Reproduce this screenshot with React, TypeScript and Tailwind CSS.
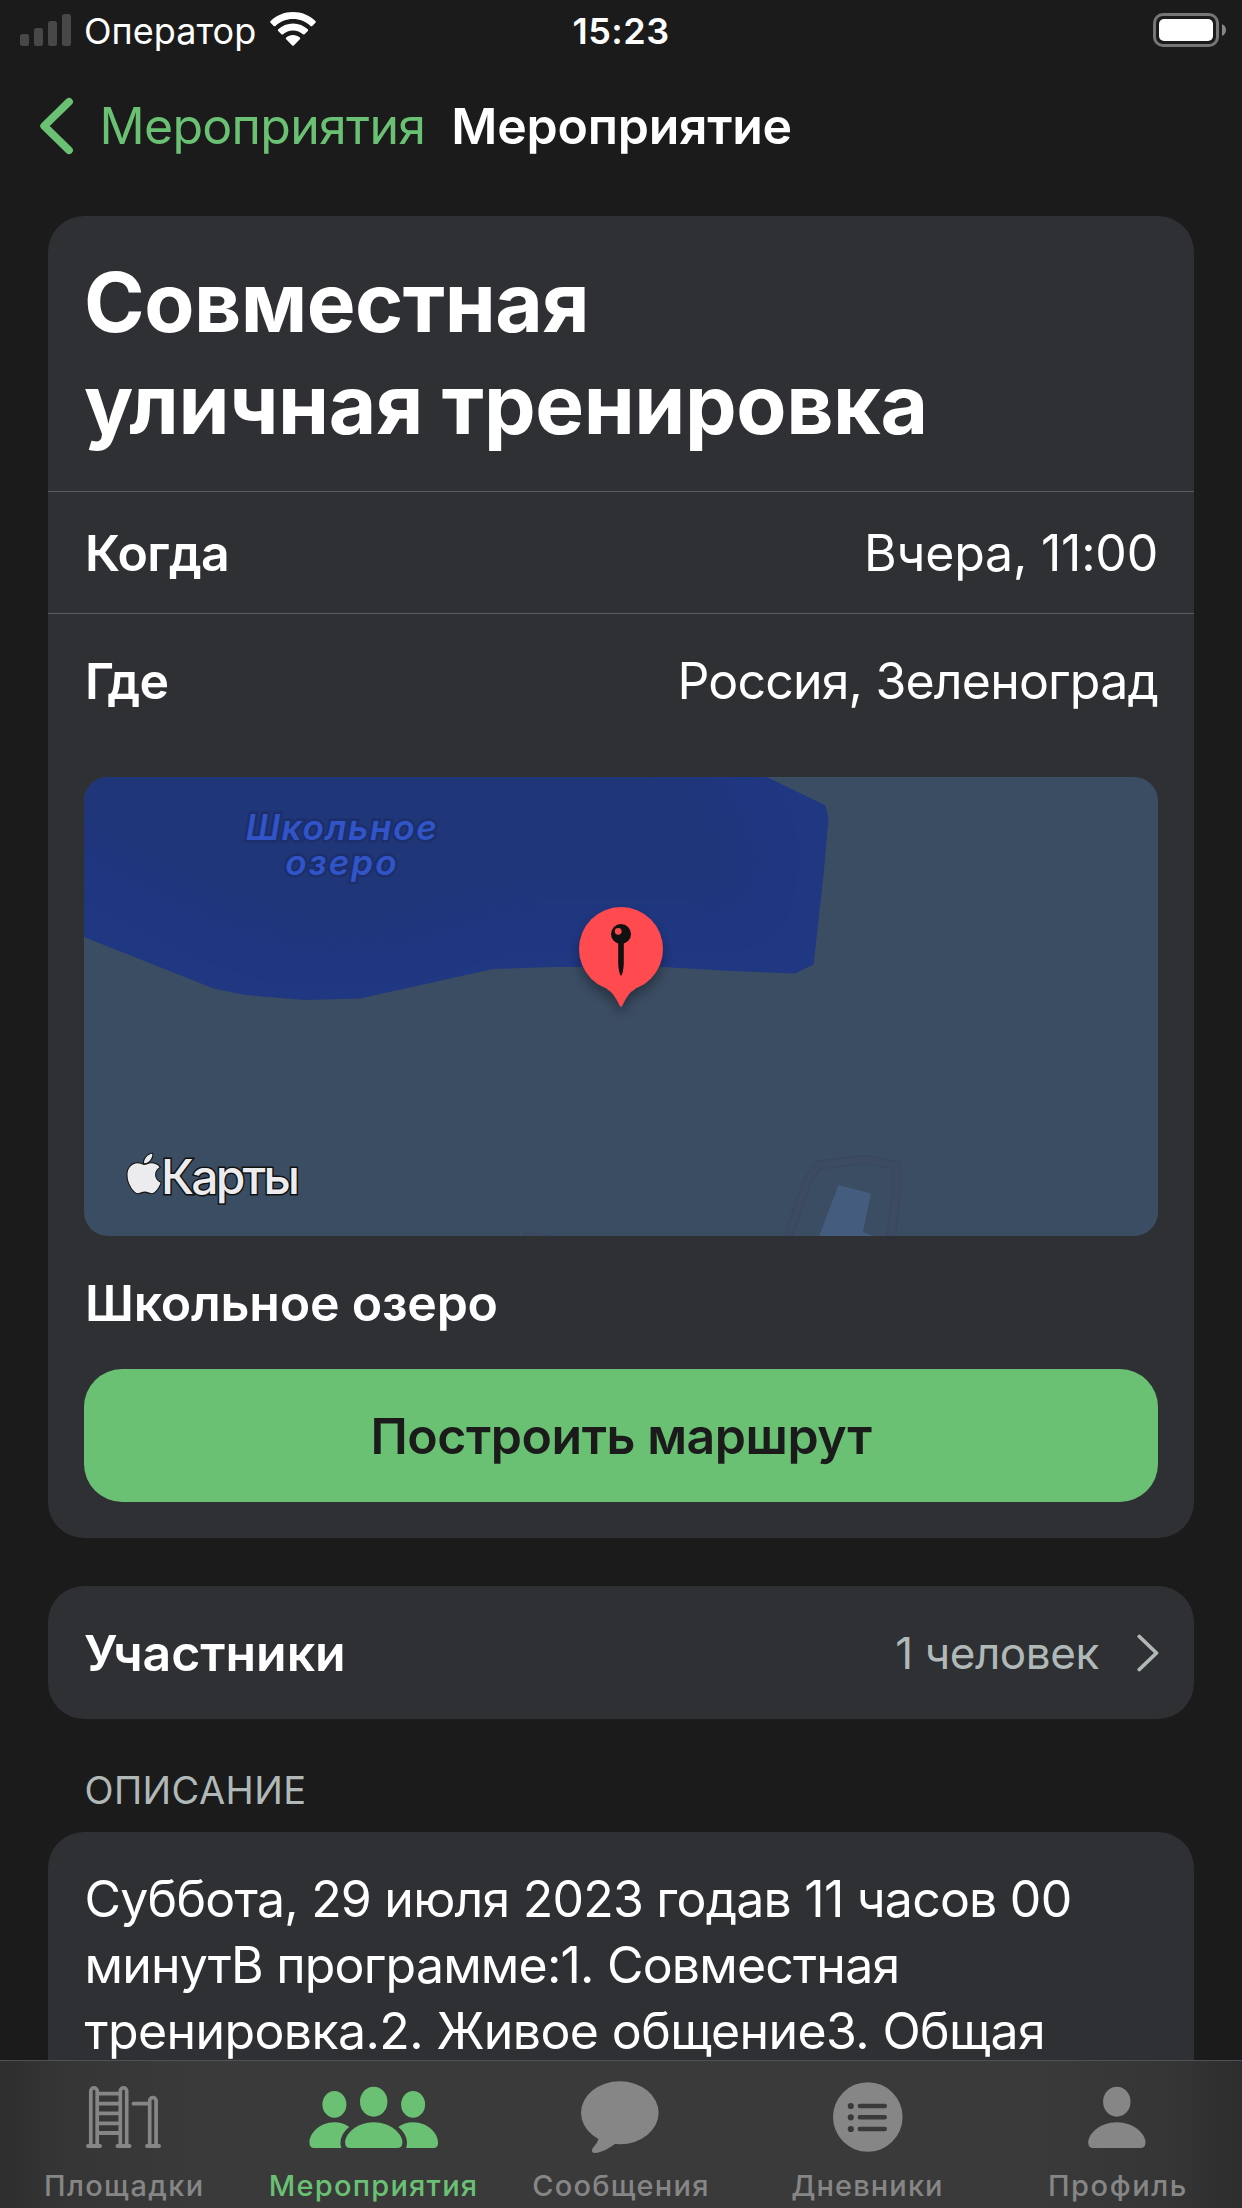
import type { ReactNode } from "react";
import { FaApple } from "react-icons/fa";

function StatusBar() {
  return (
    <div className="flex h-[60px] w-full items-center pt-[2px] text-[36px] leading-[60px] text-white">
      <div className="flex flex-1 items-center pl-[15px]">
        <svg width="52" height="32" viewBox="0 0 52 32" fill="#484848" className="mb-[2px] ml-[5px]">
          <rect x="0" y="20" width="9" height="12" rx="2.5" />
          <rect x="14" y="14" width="9" height="18" rx="2.5" />
          <rect x="28" y="7" width="9" height="25" rx="2.5" />
          <rect x="42" y="0" width="9" height="32" rx="2.5" />
        </svg>
        <span className="ml-[12px] tracking-[0.02px]">Оператор</span>
        <svg width="46" height="34" viewBox="0 0 46 34" className="mb-[4px] ml-[14px]" fill="#fff">
          <path d="M23 0 C14.200 0 6.200 3.400 .6 9 Q-.2 9.900 .6 10.700 L3.700 13.900 Q4.600 14.700 5.500 13.900 C10.200 9.500 16.300 7 23 7 S35.800 9.500 40.500 13.900 Q41.400 14.700 42.300 13.900 L45.400 10.700 Q46.200 9.900 45.400 9 C39.800 3.400 31.800 0 23 0 Z" />
          <path d="M23 11.400 C17.300 11.400 12.100 13.600 8.200 17.200 Q7.400 18 8.200 18.900 L11.400 22.200 Q12.200 23 13.100 22.200 C15.700 19.800 19.200 18.400 23 18.400 S30.300 19.800 32.900 22.200 Q33.800 23 34.600 22.200 L37.800 18.900 Q38.600 18 37.800 17.200 C33.900 13.600 28.700 11.400 23 11.400 Z" />
          <path d="M23 23 C20.400 23 18 24 16.200 25.600 Q15.400 26.400 16.200 27.200 L22.200 33.400 Q23 34.100 23.800 33.400 L29.800 27.200 Q30.600 26.400 29.800 25.600 C28 24 25.600 23 23 23 Z" />
        </svg>
      </div>
      <span className="font-semibold tracking-[0.48px]">15:23</span>
      <div className="flex flex-1 items-center justify-end pr-[15px]">
        <svg width="74" height="34" viewBox="0 0 74 34" className="mb-[2px]">
          <rect x="1.500" y="1.500" width="63" height="31" rx="8.500" fill="none" stroke="#767676" strokeWidth="3" />
          <rect x="6" y="6" width="54" height="22" rx="5" fill="#fff" />
          <path d="M69 11 Q73 13 73 17 T69 23 Z" fill="#868686" />
        </svg>
      </div>
    </div>
  );
}

function NavBar() {
  return (
    <div className="flex h-[132px] w-full items-center pl-[40px] text-[50px]">
      <svg width="34" height="58" viewBox="0 0 34 58" fill="none">
        <path d="M29 4.800 L4.200 29 L29 53.200" stroke="#6ac174" strokeWidth="7.800" strokeLinecap="round" strokeLinejoin="round" />
      </svg>
      <span className="ml-[25.5px] tracking-[-0.7px] text-[#6ac174]">Мероприятия</span>
      <span className="ml-[26px] font-semibold tracking-[-0.25px] text-white">Мероприятие</span>
    </div>
  );
}

function EventMap() {
  return (
    <div className="relative mt-[29px] h-[459px] w-full overflow-hidden rounded-[24px] bg-[#3b4d63]">
      <svg width="1074" height="459" viewBox="84 777 1074 459" className="block">
        <defs>
          <clipPath id="lake">
            <path d="M84 937 L213.600 988.500 L245.700 995 L304.600 1000 L360 998.500 L493 969 L553 967 L663 967 L731 971 L794.600 973.500 L813.600 964.500 L824 870 L828.500 818 L825.500 805.500 L766.800 777 H84 Z" />
          </clipPath>
          <filter id="deep" x="-20%" y="-20%" width="140%" height="140%" colorInterpolationFilters="sRGB">
            <feGaussianBlur stdDeviation="22" />
          </filter>
          <filter id="pinShadow" x="-50%" y="-50%" width="200%" height="200%">
            <feDropShadow dx="0" dy="7" stdDeviation="6" floodColor="#000" floodOpacity="0.35" />
          </filter>
        </defs>
        <g clipPath="url(#lake)">
          <rect x="84" y="777" width="760" height="230" fill="#203782" />
          <path d="M60 830 L220 910 L310 940 L390 935 L500 900 L740 900 L750 850 L680 730 L60 730 Z" fill="#1f3679" filter="url(#deep)" />
        </g>
        <path d="M784 1236 L804.500 1178 L817 1161 L865.500 1155.500 L899 1162 L900.500 1165 L900.500 1192 L895.500 1236 L887 1236 L892.500 1195 L892.500 1168.500 L865.500 1164 L821.500 1168.500 L812 1181 L792 1236 Z" fill="#3d4b62" stroke="#384860" strokeWidth="1.500" />
        <path d="M838.400 1185 L870.900 1193.500 L863 1232 L876 1237 L819 1237 Z" fill="#445d7e" />
        <path d="M520 1238 L526 1232.500 L560 1237" fill="#3d4b62" stroke="#384860" strokeWidth="1.500" />
        <g filter="url(#pinShadow)" fill="#ff4b4f">
          <circle cx="621" cy="949" r="42" />
          <path d="M604 985 L638 985 L634.500 989.500 C629 992 625 1000 622 1006 Q621 1007.500 620 1006 C617 1000 613 992 607.500 989.500 Z" />
        </g>
        <circle cx="621" cy="934" r="10" fill="#111" />
        <circle cx="618.200" cy="931.300" r="3.400" fill="#ff4b4f" />
        <path d="M618.200 942 H623.800 V964 Q623.300 973 621 976 Q618.700 973 618.200 964 Z" fill="#111" />
      </svg>
      <div className="absolute left-[158px] top-[33px] w-[200px] text-center text-[35px] font-semibold italic leading-[35px] text-[#3155c8] [-webkit-text-stroke:5px_#1c2f6b] [paint-order:stroke_fill]">
        <div className="tracking-[1.7px]">Школьное</div>
        <div className="tracking-[2.1px]">озеро</div>
      </div>
      <div className="absolute left-[43px] top-[374px] flex items-start text-[#ececee]">
        <FaApple className="h-[45px] w-[34px] overflow-visible [paint-order:stroke_fill]" stroke="#111" strokeWidth={24} />
        <span className="ml-0 mt-[-4px] text-[48px] font-medium leading-[60px] tracking-[-2.8px] [-webkit-text-stroke:3px_#111] [paint-order:stroke_fill]">
          Карты
        </span>
      </div>
    </div>
  );
}

function EventCard() {
  return (
    <section className="w-full rounded-[36px] bg-[#2f3034] pb-[36px] text-[50px] text-white">
      <h1 className="px-[36px] pb-[35px] pt-[36px] text-[82px] font-bold leading-[102px]">
        <span className="block tracking-[-0.52px]">Совместная</span>
        <span className="block tracking-[-0.4px]">уличная тренировка</span>
      </h1>
      <div className="flex h-[122px] items-center justify-between border-t border-[#5b5c60] pl-[37px] pr-[36px] pt-px">
        <span className="font-semibold tracking-[-0.7px]">Когда</span>
        <span className="tracking-[-0.22px]">Вчера, 11:00</span>
      </div>
      <div className="border-t border-[#5b5c60] px-[36px]">
        <div className="flex h-[134px] items-center justify-between pl-px">
          <span className="font-semibold tracking-[-0.6px]">
            <span className="tracking-[-6.600px]">Г</span>де
          </span>
          <span className="tracking-[-0.81px]">Россия, Зеленоград</span>
        </div>
        <EventMap />
        <div className="mt-[34px] pl-px font-semibold leading-[66px] tracking-[-0.21px]">Школьное озеро</div>
        <button className="mt-[33px] flex h-[133px] w-full items-center justify-center rounded-[38px] bg-[#6ac174] pt-px font-semibold tracking-[-0.45px] text-[#1b1b1b]">
          Построить маршрут
        </button>
      </div>
    </section>
  );
}

function Participants() {
  return (
    <section className="mt-[48px] flex h-[133px] w-full items-center rounded-[36px] bg-[#2f3034] pl-[36px] pr-[35px]">
      <span className="flex-1 pt-px text-[50px] font-semibold tracking-[-0.05px] text-white">Участники</span>
      <span className="text-[44px] tracking-[-0.4px] text-[#b0b9b7]">1 человек</span>
      <svg width="22" height="38" viewBox="0 0 22 38" fill="none" className="ml-[38px]">
        <path d="M2.300 2.500 L19.500 19 L2.300 35.500" stroke="#b0b9b7" strokeWidth="3.800" strokeLinecap="round" strokeLinejoin="round" />
      </svg>
    </section>
  );
}

function Tab({ label, tone, spacing, viewBox, children }: { label: string; tone: string; spacing: string; viewBox: string; children: ReactNode }) {
  return (
    <div className={`flex flex-1 flex-col items-center ${tone}`}>
      <svg width="160" height="106" viewBox={viewBox} fill="currentColor">
        {children}
      </svg>
      <span className={`text-[29px] font-medium leading-[37px] ${spacing}`}>{label}</span>
    </div>
  );
}

const post = (x: number, top: number) => `M${x} 85 V${top + 3.200} a3.200 3.200 0 0 1 6.400 0 V85`;

function TabBar() {
  return (
    <nav className="flex h-[148px] w-full shrink-0 border-t border-[#505154] bg-[linear-gradient(90deg,#2d2e2d_0px,#343534_60px,#3a3a3b_190px,#3a3a3b_1040px,#343534_1170px,#2c2d2c_1242px)]">
      <Tab label="Площадки" tone="text-[#868686]" spacing="tracking-[1.36px]" viewBox="44 0 160 106">
        <g fill="none" stroke="currentColor" strokeWidth="3.700" strokeLinecap="round">
          <path d={post(90.800, 26.900)} />
          <path d={post(120.300, 26.900)} />
          <path d={post(149.700, 36.600)} />
          <path d="M88 85 H100 M117.500 85 H129.500 M147 85 H159" strokeWidth="4" />
          <path d="M99 32.700 H119 M99 42.700 H119 M99 52.300 H119 M99 62.300 H119 M99 72 H119 M133.500 42.700 H148" strokeWidth="3.800" />
        </g>
      </Tab>
      <Tab label="Мероприятия" tone="text-[#6ac174]" spacing="tracking-[1.23px] ml-[2px]" viewBox="292.6 0 160 106">
        <ellipse cx="373.300" cy="40.700" rx="13.700" ry="15" />
        <ellipse cx="334" cy="43.400" rx="12" ry="13.300" />
        <ellipse cx="412.700" cy="43.400" rx="12" ry="13.300" />
        <path d="M350 87 Q344.700 87 344.700 81.500 C344.700 73 356 61.200 373.300 61.200 S402 73 402 81.500 Q402 87 396.700 87 Z" />
        <path d="M314 87 Q309 87 309 81.500 C309 73 318.500 61.200 334 61.200 C340 61.200 345 63 348.800 66 C341.500 72 338.500 79.500 340.900 87 Z" />
        <path d="M432.700 87 Q437.700 87 437.700 81.500 C437.700 73 428.200 61.200 412.700 61.200 C406.700 61.200 401.700 63 397.900 66 C405.200 72 408.200 79.500 405.800 87 Z" />
      </Tab>
      <Tab label="Сообщения" tone="text-[#868686]" spacing="tracking-[1.22px]" viewBox="541 0 160 106">
        <ellipse cx="619.800" cy="51.800" rx="38.800" ry="31.500" />
        <path d="M599.500 76 Q597.500 82 592.500 87.500 Q590.700 91.600 594.500 92 C602 91.500 609 87.500 615.500 82.500 Z" />
      </Tab>
      <Tab label="Дневники" tone="text-[#868686]" spacing="tracking-[1.11px] mr-[4px]" viewBox="789.2 0 160 106">
        <circle cx="868" cy="56" r="34.800" />
        <g fill="none" stroke="#3a3a3b" strokeLinecap="round">
          <path d="M860 45 H885 M860 56.300 H885 M860 68 H885" strokeWidth="4.400" />
          <path d="M851 45 h.01 M851 56.300 h.01 M851 68 h.01" strokeWidth="6.200" />
        </g>
      </Tab>
      <Tab label="Профиль" tone="text-[#868686]" spacing="tracking-[1.56px]" viewBox="1037.8 0 160 106">
        <ellipse cx="1116.600" cy="40.700" rx="13.700" ry="15" />
        <path d="M1093.300 87 Q1088 87 1088 81.500 C1088 73 1099.300 61.200 1116.600 61.200 S1145.300 73 1145.300 81.500 Q1145.300 87 1140 87 Z" />
      </Tab>
    </nav>
  );
}

export default function App() {
  return (
    <div className="flex h-[2208px] w-[1242px] flex-col overflow-hidden bg-[#1b1b1b] font-['Inter',sans-serif]">
      <StatusBar />
      <NavBar />
      <main className="flex min-h-0 flex-1 flex-col overflow-hidden px-[48px] pt-[24px]">
        <EventCard />
        <Participants />
        <h2 className="mt-[41px] px-[36.5px] text-[38px] leading-[60px] tracking-[0.38px] text-[#b0b9b7]">ОПИСАНИЕ</h2>
        <section className="mt-[12px] min-h-[228px] w-full flex-1 whitespace-nowrap rounded-t-[36px] bg-[#2f3034] px-[36.5px] pt-[34px] text-[50px] leading-[66px] text-white">
          <span className="block tracking-[-0.78px]">Суббота, 29 июля 2023 годав 11 часов 00</span>
          <span className="block tracking-[-0.8px]">минутВ программе:1. Совместная</span>
          <span className="block tracking-[-0.6px]">тренировка.2. Живое общение3. Общая</span>
        </section>
      </main>
      <TabBar />
    </div>
  );
}
